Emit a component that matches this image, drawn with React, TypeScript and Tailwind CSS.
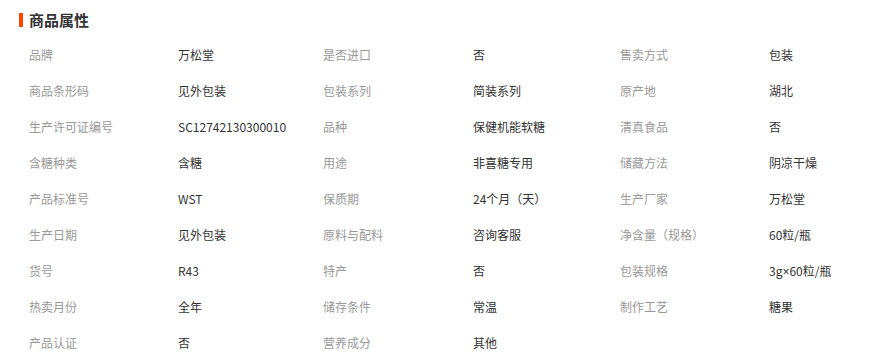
import React from 'react'

const rows: React.ReactNode[][] = [
  ['品牌', '万松堂', '是否进口', '否', '售卖方式', '包装'],
  ['商品条形码', '见外包装', '包装系列', '简装系列', '原产地', '湖北'],
  ['生产许可证编号', 'SC12742130300010', '品种', '保健机能软糖', '清真食品', '否'],
  ['含糖种类', '含糖', '用途', '非喜糖专用', '储藏方法', '阴凉干燥'],
  ['产品标准号', 'WST', '保质期', '24个月（天）', '生产厂家', '万松堂'],
  ['生产日期', '见外包装', '原料与配料', '咨询客服', '净含量（规格）', '60粒/瓶'],
  [
    '货号',
    'R43',
    '特产',
    '否',
    '包装规格',
    <>
      3g<span style={{ fontFamily: '"Liberation Sans", sans-serif' }}>×</span>60粒/瓶
    </>,
  ],
  ['热卖月份', '全年', '储存条件', '常温', '制作工艺', '糖果'],
  ['产品认证', '否', '营养成分', '其他'],
]

const widths = ['w-[149px]', 'w-[145px]', 'w-[150px]', 'w-[147px]', 'w-[149px]', 'w-[110px]']

export default function App() {
  return (
    <div className="w-[893px] h-[357px] bg-white overflow-hidden" style={{ fontFamily: '"Microsoft YaHei", "Noto Sans CJK SC", sans-serif' }}>
      {/* Header */}
      <div className="h-[37px] flex items-start pt-[10px] pl-[19px]">
        <div className="flex items-center gap-[6px]">
          <span className="w-[4px] h-[14px] bg-[#ff4400]" />
          <h2 className="text-[15px] leading-[20px] font-bold text-[#333]">商品属性</h2>
        </div>
      </div>

      {/* Attributes */}
      <div className="pl-[29px]">
        {rows.map((r, i) => (
          <div key={i} className="flex h-[36px] items-center text-[12px]">
            {r.map((t, j) => (
              <div key={j} className={`${widths[j]} shrink-0 whitespace-nowrap ${j % 2 === 0 ? 'text-[#999]' : 'text-[#333]'}`}>
                {t}
              </div>
            ))}
          </div>
        ))}
      </div>
    </div>
  )
}
